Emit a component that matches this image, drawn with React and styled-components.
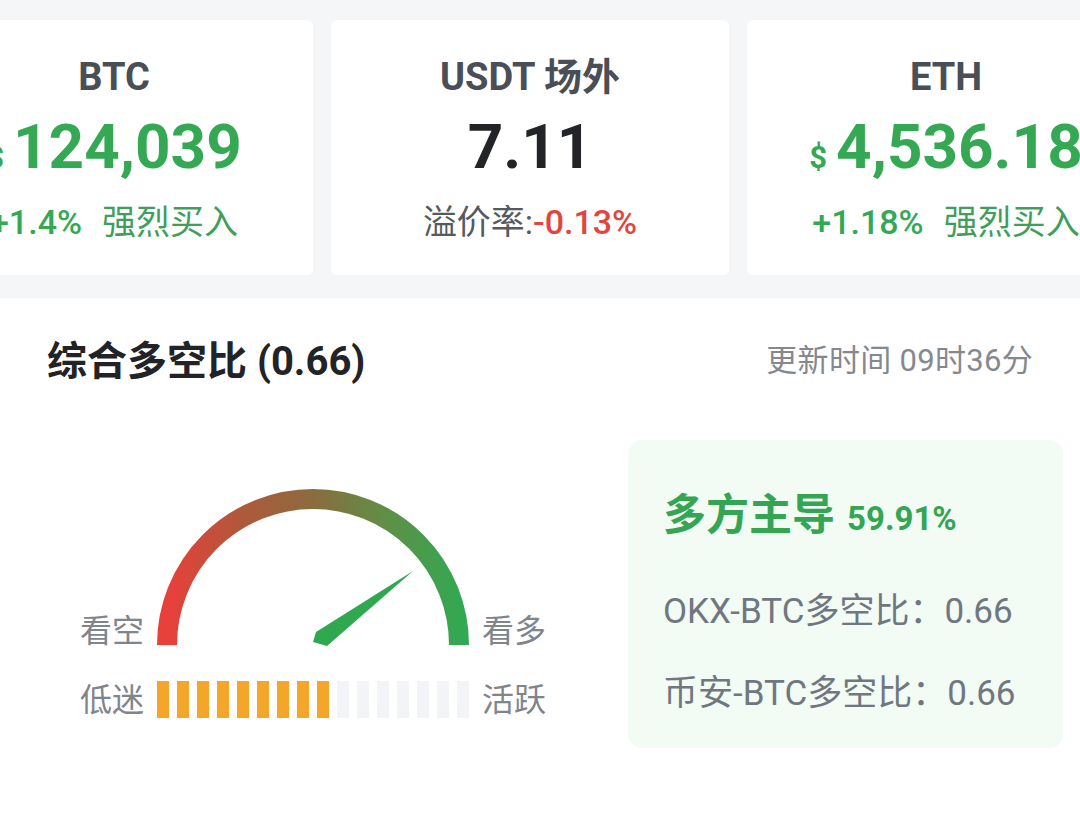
import React from "react";
import styled, { createGlobalStyle } from "styled-components";

const GlobalStyle = createGlobalStyle`
  html, body { margin: 0; padding: 0; }
  body {
    font-family: "Roboto", "Noto Sans CJK SC", sans-serif;
    background: #f5f6f8;
  }
  #root { min-height: 100vh; }
`;

const Page = styled.div`
  min-height: 100vh;
  display: flex;
  flex-direction: column;
  background: #f5f6f8;
  overflow: hidden;
`;

const CardViewport = styled.div`
  overflow: hidden;
  padding: 20px 0 23px;
`;

const CardTrack = styled.div`
  display: flex;
  gap: 18px;
  margin-left: -85px;
`;

const Card = styled.div`
  flex: 0 0 398px;
  height: 255px;
  background: #fff;
  border-radius: 6px;
  display: flex;
  flex-direction: column;
  align-items: center;
  box-sizing: border-box;
  padding-top: 35px;
`;

const CardTitle = styled.div`
  font-size: 38px;
  line-height: 44px;
  font-weight: 700;
  color: #4a4e56;
  white-space: nowrap;
`;

const Price = styled.div`
  margin-top: 12px;
  height: 72px;
  display: flex;
  align-items: baseline;
  gap: 9px;
  line-height: 72px;
  font-weight: 700;
  color: ${(p) => p.$color};
  white-space: nowrap;
`;

const Currency = styled.span`
  font-size: 31px;
`;

const Amount = styled.span`
  font-size: 62px;
`;

const CardFoot = styled.div`
  margin-top: 19px;
  height: 40px;
  display: flex;
  align-items: baseline;
  gap: ${(p) => p.$gap || 0}px;
  font-size: 34px;
  line-height: 40px;
  white-space: nowrap;
`;

const Change = styled.span`
  font-weight: 500;
  color: ${(p) => p.$color};
`;

const Note = styled.span`
  font-weight: 400;
  color: ${(p) => p.$color};
`;

const Section = styled.div`
  flex: 1;
  background: #fff;
  padding: 36px 47px 0;
`;

const Header = styled.div`
  display: flex;
  justify-content: space-between;
  align-items: center;
  height: 47px;
`;

const SectionTitle = styled.div`
  font-size: 40px;
  font-weight: 700;
  color: #222326;
`;

const UpdateTime = styled.div`
  font-size: 31px;
  letter-spacing: 0.3px;
  color: #85898f;
`;

const Body = styled.div`
  display: flex;
  align-items: flex-start;
  padding-top: 58px;
  gap: 82px;
  margin-right: -30px;
`;

const Gauge = styled.div`
  margin-top: 50px;
  margin-left: 33px;
  display: grid;
  grid-template-columns: auto 312px auto;
  column-gap: 13px;
  row-gap: 35px;
  align-items: end;
`;

const GaugeLabel = styled.div`
  font-size: 32px;
  line-height: 36px;
  color: #80858c;
  white-space: nowrap;
  align-self: ${(p) => p.$align || "end"};
  margin-bottom: ${(p) => p.$mb || 0}px;
`;

const Dial = styled.svg`
  display: block;
  overflow: visible;
`;

const Bars = styled.div`
  display: flex;
  gap: 8px;
  height: 37px;
`;

const Bar = styled.div`
  flex: 0 0 12px;
  background: ${(p) => (p.$on ? "#f4a62a" : "#f3f4f7")};
`;

const SidePanel = styled.div`
  width: 435px;
  height: 308px;
  box-sizing: border-box;
  background: #f2fbf4;
  border-radius: 14px;
  padding: 50px 0 0 35px;
  margin-top: 1px;
`;

const Dominant = styled.div`
  display: flex;
  align-items: baseline;
  gap: 12px;
  color: #34a553;
  font-weight: 700;
  line-height: 50px;
`;

const DominantLabel = styled.span`
  font-size: 43px;
`;

const DominantPct = styled.span`
  font-size: 33px;
`;

const RatioLine = styled.div`
  font-size: 35px;
  line-height: 42px;
  color: #707780;
  margin-top: ${(p) => p.$mt}px;
  white-space: nowrap;
`;

const GREEN = "#34a853";
const SOFT_GREEN = "#3f9e5c";

function GaugeDial() {
  return (
    <Dial width="312" height="157" viewBox="0 0 312 157">
      <defs>
        <linearGradient id="arcGrad" x1="0" y1="0" x2="1" y2="0">
          <stop offset="0%" stopColor="#e8403a" />
          <stop offset="25%" stopColor="#b0583a" />
          <stop offset="50%" stopColor="#8a6c3f" />
          <stop offset="75%" stopColor="#5f8f47" />
          <stop offset="100%" stopColor="#33a852" />
        </linearGradient>
      </defs>
      <path
        d="M 10 156 A 146 146 0 0 1 302 156"
        fill="none"
        stroke="url(#arcGrad)"
        strokeWidth="20"
      />
      <polygon points="256,82 159,143 156,153 170,157" fill="#2fa84f" />
    </Dial>
  );
}

export default function App() {
  const bars = Array.from({ length: 16 }, (_, i) => i < 9);
  return (
    <>
      <GlobalStyle />
      <Page>
        <CardViewport>
          <CardTrack>
            <Card>
              <CardTitle>BTC</CardTitle>
              <Price $color={GREEN}>
                <Currency>$</Currency>
                <Amount>124,039</Amount>
              </Price>
              <CardFoot $gap={20}>
                <Change $color={GREEN}>+1.4%</Change>
                <Note $color={SOFT_GREEN}>强烈买入</Note>
              </CardFoot>
            </Card>
            <Card>
              <CardTitle>USDT 场外</CardTitle>
              <Price $color="#232428">
                <Amount>7.11</Amount>
              </Price>
              <CardFoot>
                <Note $color="#555a60">溢价率:</Note>
                <Change $color="#e0463d">-0.13%</Change>
              </CardFoot>
            </Card>
            <Card>
              <CardTitle>ETH</CardTitle>
              <Price $color={GREEN}>
                <Currency>$</Currency>
                <Amount>4,536.18</Amount>
              </Price>
              <CardFoot $gap={20}>
                <Change $color={GREEN}>+1.18%</Change>
                <Note $color={SOFT_GREEN}>强烈买入</Note>
              </CardFoot>
            </Card>
          </CardTrack>
        </CardViewport>
        <Section>
          <Header>
            <SectionTitle>综合多空比 (0.66)</SectionTitle>
            <UpdateTime>更新时间 09时36分</UpdateTime>
          </Header>
          <Body>
            <Gauge>
              <GaugeLabel $mb={-3}>看空</GaugeLabel>
              <GaugeDial />
              <GaugeLabel $mb={-3}>看多</GaugeLabel>
              <GaugeLabel $align="center">低迷</GaugeLabel>
              <Bars>
                {bars.map((on, i) => (
                  <Bar key={i} $on={on} />
                ))}
              </Bars>
              <GaugeLabel $align="center">活跃</GaugeLabel>
            </Gauge>
            <SidePanel>
              <Dominant>
                <DominantLabel>多方主导</DominantLabel>
                <DominantPct>59.91%</DominantPct>
              </Dominant>
              <RatioLine $mt={47}>OKX-BTC多空比：0.66</RatioLine>
              <RatioLine $mt={40}>币安-BTC多空比：0.66</RatioLine>
            </SidePanel>
          </Body>
        </Section>
      </Page>
    </>
  );
}
